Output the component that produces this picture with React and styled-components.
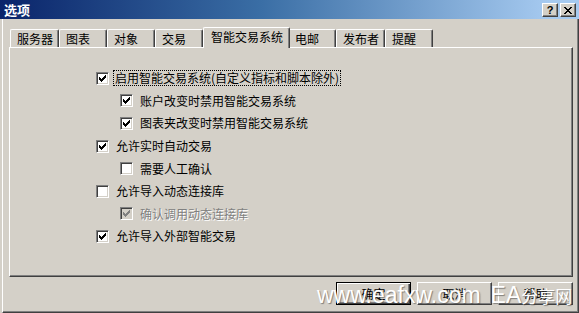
import React from "react";
import styled, { createGlobalStyle, css } from "styled-components";

const Global = createGlobalStyle`
  html, body { margin: 0; padding: 0; background: #d4d0c8; overflow: hidden; }
  body { font-family: "Noto Sans CJK SC", "DejaVu Sans", sans-serif; font-size: 12px; color: #000; }
`;

const Window = styled.div`
  position: relative;
  width: 579px;
  height: 313px;
  box-sizing: border-box;
  display: flex;
  flex-direction: column;
  background: #d4d0c8;
`;

const TitleBar = styled.div`
  height: 19px;
  flex: none;
  display: flex;
  align-items: center;
  justify-content: space-between;
  padding: 0 3px 0 4px;
  background: linear-gradient(to right, #0a246a 0%, #3a6ea5 45%, #a6caf0 95%);
`;

const Title = styled.span`
  color: #fff;
  font-weight: bold;
  font-size: 13px;
  line-height: 14px;
`;

const TitleButtons = styled.div`
  display: flex;
  gap: 2px;
  margin-top: 1px;
`;

const TitleButton = styled.div`
  width: 16px;
  height: 14px;
  box-sizing: border-box;
  display: flex;
  align-items: center;
  justify-content: center;
  background: #d4d0c8;
  border: 1px solid;
  border-color: #fff #404040 #404040 #fff;
  box-shadow: inset -1px -1px #808080;
  font-family: "Liberation Sans", Arial, sans-serif;
  font-weight: bold;
  font-size: 11px;
  line-height: 11px;
  color: #000;
`;

const Body = styled.div`
  flex: 1;
  display: flex;
  flex-direction: column;
  margin-left: 2px;
  border-left: 1px solid #fff;
  border-right: 1px solid #404040;
  border-bottom: 1px solid #404040;
  box-shadow: inset -1px -1px #808080;
  padding: 8px 5px 5px 6px;
`;

const TabStrip = styled.div`
  display: flex;
  align-items: flex-end;
  height: 20px;
  padding-left: 1px;
  position: relative;
  z-index: 1;
`;

const Tab = styled.div`
  box-sizing: border-box;
  min-width: 48px;
  height: 18px;
  padding: 0 5px 0 6px;
  display: flex;
  align-items: center;
  background: #d4d0c8;
  border-top: 1px solid #fff;
  border-left: 1px solid #fff;
  border-right: 1px solid #404040;
  border-radius: 2px 2px 0 0;
  box-shadow: inset -1px 0 #808080;
  line-height: 14px;
  white-space: nowrap;
  ${(p) =>
    p.$active &&
    css`
      height: 21px;
      margin-bottom: -1px;
      margin-right: -2px;
      padding: 0 6px 2px 7px;
      position: relative;
      z-index: 2;
    `}
`;

const Panel = styled.div`
  box-sizing: border-box;
  height: 230px;
  border-top: 1px solid #fff;
  border-left: 1px solid #fff;
  border-right: 1px solid #404040;
  border-bottom: 1px solid #404040;
  box-shadow: inset -1px -1px #808080;
  padding: 19px 0 0 86px;
  display: flex;
  flex-direction: column;
`;

const Row = styled.div`
  height: 22.6px;
  display: flex;
  align-items: center;
  padding-left: ${(p) => (p.$indent ? 24 : 0)}px;
`;

const Box = styled.span`
  width: 13px;
  height: 13px;
  box-sizing: border-box;
  flex: none;
  display: flex;
  align-items: center;
  justify-content: center;
  background: ${(p) => (p.$disabled ? "#d4d0c8" : "#fff")};
  border: 1px solid;
  border-color: #808080 #fff #fff #808080;
  box-shadow: inset 1px 1px #404040, inset -1px -1px #d4d0c8;
`;

const Label = styled.span`
  margin-left: ${(p) => (p.$focus ? 4 : 5)}px;
  padding: 0 1px;
  line-height: 14px;
  white-space: nowrap;
  border: 1px dotted ${(p) => (p.$focus ? "#000" : "transparent")};
  color: ${(p) => (p.$disabled ? "#808080" : "#000")};
  text-shadow: ${(p) => (p.$disabled ? "1px 1px 0 #fff" : "none")};
`;

const Footer = styled.div`
  display: flex;
  justify-content: flex-end;
  gap: 6px;
  margin-top: 5px;
`;

const Button = styled.div`
  width: 75px;
  height: 23px;
  box-sizing: border-box;
  display: flex;
  align-items: center;
  justify-content: center;
  background: #d4d0c8;
  border: 1px solid;
  border-color: #fff #404040 #404040 #fff;
  box-shadow: inset -1px -1px #808080;
  line-height: 14px;
  ${(p) =>
    p.$default &&
    css`
      border-color: #000;
      box-shadow: inset 1px 1px #fff, inset -1px -1px #404040, inset -2px -2px #808080;
    `}
`;

const Watermark = styled.div`
  position: absolute;
  left: 317px;
  top: 284px;
  display: flex;
  align-items: baseline;
  color: #fff;
  line-height: 1;
  white-space: nowrap;
  text-shadow: 1px 1px 1px rgba(60, 60, 60, 0.55);
  pointer-events: none;
  z-index: 5;
`;

const WmLatin = styled.span`
  font-family: "Liberation Sans", Arial, sans-serif;
  font-size: 23px;
  margin-right: ${(p) => p.$gap || 0}px;
`;

const WmCjk = styled.span`
  font-family: "Noto Sans CJK SC", sans-serif;
  font-size: 17px;
`;

const Check = ({ color }) => (
  <svg width="7" height="7" viewBox="0 0 7 7" shapeRendering="crispEdges">
    <path
      fill={color}
      d="M0 2h1v3H0z M1 3h1v3H1z M2 4h1v3H2z M3 3h1v3H3z M4 2h1v3H4z M5 1h1v3H5z M6 0h1v3H6z"
    />
  </svg>
);

const CloseGlyph = () => (
  <svg width="8" height="7" viewBox="0 0 8 7" shapeRendering="crispEdges">
    <path
      fill="#000"
      d="M0 0h2v1H0z M6 0h2v1H6z M1 1h2v1H1z M5 1h2v1H5z M2 2h4v1H2z M3 3h2v1H3z M2 4h4v1H2z M1 5h2v1H1z M5 5h2v1H5z M0 6h2v1H0z M6 6h2v1H6z"
    />
  </svg>
);

const tabs = ["服务器", "图表", "对象", "交易", "智能交易系统", "电邮", "发布者", "提醒"];

const options = [
  { text: "启用智能交易系统(自定义指标和脚本除外)", checked: true, focus: true },
  { text: "账户改变时禁用智能交易系统", checked: true, indent: true },
  { text: "图表夹改变时禁用智能交易系统", checked: true, indent: true },
  { text: "允许实时自动交易", checked: true },
  { text: "需要人工确认", checked: false, indent: true },
  { text: "允许导入动态连接库", checked: false },
  { text: "确认调用动态连接库", checked: true, indent: true, disabled: true },
  { text: "允许导入外部智能交易", checked: true },
];

export default function App() {
  return (
    <>
      <Global />
      <Window>
        <TitleBar>
          <Title>选项</Title>
          <TitleButtons>
            <TitleButton>?</TitleButton>
            <TitleButton>
              <CloseGlyph />
            </TitleButton>
          </TitleButtons>
        </TitleBar>
        <Body>
          <TabStrip>
            {tabs.map((t) => (
              <Tab key={t} $active={t === "智能交易系统"}>
                {t}
              </Tab>
            ))}
          </TabStrip>
          <Panel>
            {options.map((o) => (
              <Row key={o.text} $indent={o.indent}>
                <Box $disabled={o.disabled}>
                  {o.checked && <Check color={o.disabled ? "#808080" : "#000"} />}
                </Box>
                <Label $focus={o.focus} $disabled={o.disabled}>
                  {o.text}
                </Label>
              </Row>
            ))}
          </Panel>
          <Footer>
            <Button $default>确定</Button>
            <Button>取消</Button>
            <Button>帮助</Button>
          </Footer>
        </Body>
        <Watermark>
          <WmLatin $gap={10}>www.eafxw.com</WmLatin>
          <WmLatin>EA</WmLatin>
          <WmCjk>分享网</WmCjk>
        </Watermark>
      </Window>
    </>
  );
}
